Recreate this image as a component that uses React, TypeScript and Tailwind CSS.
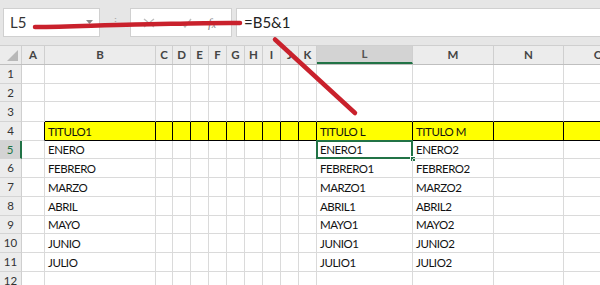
import type { ReactNode } from 'react';

type Col = { key: string; w: string };

const COLS: Col[] = [
  { key: 'A', w: 'w-[23px]' },
  { key: 'B', w: 'w-[111px]' },
  { key: 'C', w: 'w-[17px]' },
  { key: 'D', w: 'w-[18px]' },
  { key: 'E', w: 'w-[18px]' },
  { key: 'F', w: 'w-[18px]' },
  { key: 'G', w: 'w-[18px]' },
  { key: 'H', w: 'w-[18px]' },
  { key: 'I', w: 'w-[18px]' },
  { key: 'J', w: 'w-[18px]' },
  { key: 'K', w: 'w-[18px]' },
  { key: 'L', w: 'w-[96px]' },
  { key: 'M', w: 'w-[81px]' },
  { key: 'N', w: 'w-[70px]' },
  { key: 'O', w: 'w-[70px]' },
];

const ROW_H = ['h-[19px]', 'h-[18px]', 'h-[20px]', 'h-[19px]', 'h-[18px]', 'h-[19px]', 'h-[19px]', 'h-[19px]', 'h-[18px]', 'h-[19px]', 'h-[19px]', 'h-[19px]'];

const MONTHS = ['ENERO', 'FEBRERO', 'MARZO', 'ABRIL', 'MAYO', 'JUNIO', 'JULIO'];

function cellValue(row: number, col: string): string {
  if (row === 4) {
    if (col === 'B') return 'TITULO1';
    if (col === 'L') return 'TITULO L';
    if (col === 'M') return 'TITULO M';
    return '';
  }
  const m = MONTHS[row - 5];
  if (!m) return '';
  if (col === 'B') return m;
  if (col === 'L') return m + '1';
  if (col === 'M') return m + '2';
  return '';
}

function cellClass(row: number, idx: number): string {
  const inTable = idx >= 1;
  if (row === 4 && inTable) return 'bg-[#ffff00] border-r border-b border-r-black border-b-black';
  if (row === 4 && idx === 0) return 'border-r border-b border-r-black border-b-[#dadada]';
  if (row === 3 && inTable) return 'border-r border-b border-r-[#dadada] border-b-black';
  return 'border-r border-b border-[#dadada]';
}

function Cell({ row, idx, col }: { row: number; idx: number; col: Col }) {
  const selected = row === 5 && col.key === 'L';
  return (
    <div className={`relative shrink-0 ${col.w} ${cellClass(row, idx)} flex items-center pl-[3px] pt-[1px] overflow-visible whitespace-nowrap`}>
      <span className="text-[11.5px] leading-none text-[#111] tracking-[-0.45px]">{cellValue(row, col.key)}</span>
      {selected && (
        <>
          <div className="absolute -top-[1px] -left-[1px] -right-[1px] -bottom-[1px] border-2 border-[#217346]" />
          <div className="absolute -right-[4px] -bottom-[4px] w-[6px] h-[6px] bg-[#217346] border border-white" />
        </>
      )}
    </div>
  );
}

function Box({ className, children }: { className: string; children?: ReactNode }) {
  return <div className={`h-[29px] bg-white border border-[#d0d0d0] flex items-center ${className}`}>{children}</div>;
}

export default function App() {
  return (
    <div className="relative w-[600px] h-[285px] overflow-hidden bg-white font-['Lato','Liberation_Sans',sans-serif]">
      {/* formula bar */}
      <div className="h-[46px] bg-[#e6e6e6] border-b border-[#cfcfcf] flex items-start pt-[8px] pl-[3px]">
        <Box className="w-[97px] pl-[6px] justify-between pr-[6px]">
          <span className="text-[15px] text-[#333]">L5</span>
          <svg width="7" height="5" viewBox="0 0 7 5"><path d="M0 0h7L3.5 4z" fill="#8a8a8a" /></svg>
        </Box>
        <div className="w-[30px] h-[29px] flex items-center justify-center text-[#a8a8a8] text-[11px]">⋮</div>
        <Box className="w-[102px] pl-[12px]">
          <svg width="12" height="10" viewBox="0 0 12 10" className="mr-[26px]"><path d="M1 1l10 8M11 1L1 9" stroke="#bdbdbd" strokeWidth="1.4" /></svg>
          <svg width="11" height="10" viewBox="0 0 11 10" className="mr-[16px]"><path d="M1 5l3 4 6-8" stroke="#bdbdbd" strokeWidth="1.4" fill="none" /></svg>
          <span className="italic text-[13px] text-[#8a8a8a] font-['Liberation_Serif',serif]">f</span>
          <span className="italic text-[10px] text-[#8a8a8a] font-['Liberation_Serif',serif] mt-[4px]">x</span>
        </Box>
        <Box className="ml-[4px] flex-1 pl-[7px] border-r-0">
          <span className="text-[15px] text-[#222]">=B5&amp;1</span>
        </Box>
      </div>

      {/* column headers */}
      <div className="flex h-[19px] bg-[#ececec] border-b border-[#bfbfbf]">
        <div className="relative w-[22px] shrink-0 border-r border-[#cfcfcf]">
          <svg width="12" height="12" viewBox="0 0 12 12" className="absolute left-[7px] bottom-[2px]"><path d="M11 0V11H0z" fill="#b8b8b8" /></svg>
        </div>
        {COLS.map((c) => {
          const sel = c.key === 'L';
          return (
            <div
              key={c.key}
              className={`shrink-0 ${c.w} flex items-center justify-center text-[11.5px] font-bold border-r border-[#cfcfcf] ${sel ? 'bg-[#d3d3d3] border-b-2 border-b-[#217346] text-[#555]' : 'text-[#444]'}`}
            >
              {c.key}
            </div>
          );
        })}
      </div>

      {/* rows */}
      {ROW_H.map((h, i) => {
        const row = i + 1;
        const sel = row === 5;
        return (
          <div key={row} className={`flex ${h}`}>
            <div
              className={`w-[22px] shrink-0 flex items-center justify-center text-[11.5px] border-b border-[#d4d4d4] ${sel ? 'bg-[#d3d3d3] text-[#217346] border-r-2 border-r-[#217346]' : 'bg-[#ececec] text-[#333] border-r border-r-[#cfcfcf]'}`}
            >
              {row}
            </div>
            {COLS.map((c, idx) => (
              <Cell key={c.key} row={row} idx={idx} col={c} />
            ))}
          </div>
        );
      })}

      {/* hand-drawn red marks */}
      <svg className="absolute inset-0 pointer-events-none" width="600" height="285" viewBox="0 0 600 285">
        <path d="M35 27 C70 27 100 25 135 24.5 S210 22.5 240 23" stroke="#c9212c" strokeWidth="4.5" fill="none" strokeLinecap="round" />
        <path d="M275 39.5 L355 113" stroke="#c9212c" strokeWidth="4.5" fill="none" strokeLinecap="round" />
      </svg>
    </div>
  );
}
